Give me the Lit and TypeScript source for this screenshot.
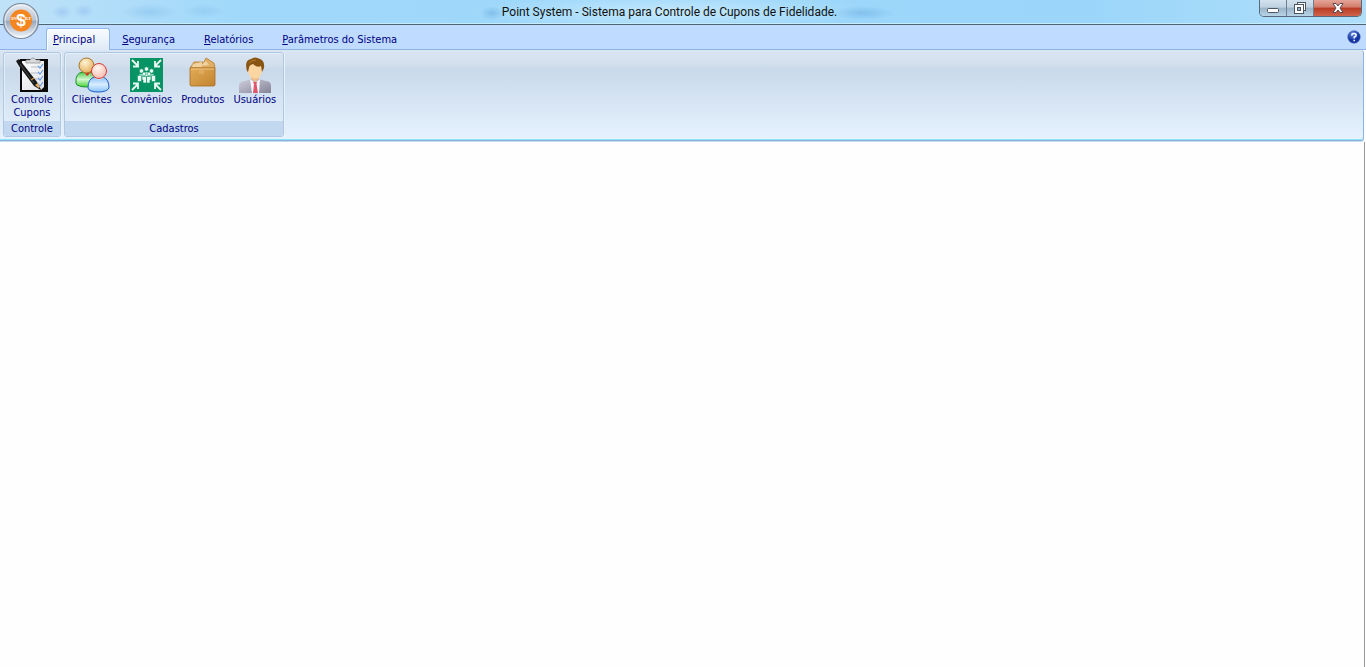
import { LitElement, html, css, svg } from "lit";
import { customElement, state } from "lit/decorators.js";

const icons = {
  controle: svg`<svg width="36" height="36" viewBox="0 0 36 36" aria-hidden="true">
    <defs><linearGradient id="paper" x1="0" y1="0" x2="1" y2="1"><stop offset="0" stop-color="#fff"/><stop offset="1" stop-color="#dcdfe4"/></linearGradient></defs>
    <rect x="6" y="2" width="28" height="33" fill="#0a0a0a"/>
    <path d="M8 4H30V30L27 33H8Z" fill="url(#paper)"/>
    <path d="M12 3H16Q19-1 22 3H26V6H12Z" fill="#d9dadd" stroke="#888" stroke-width=".7"/>
    <path d="M17 10H24M17 16H24M19 22H24M20 28H24" stroke="#aab0ba" stroke-width=".8"/>
    <path d="M24 9l2 2 3-4M24 15l2 2 3-4M24 21l2 2 3-4M24 27l2 2 3-4" fill="none" stroke="#6c9ce2" stroke-width="1.200"/>
    <path d="M2 4L5 2 23 25 27 33 20 29 5 9Z" fill="#171717"/>
    <path d="M6 7L20 26" stroke="#585858" stroke-width=".8"/>
    <path d="M17 23L20 21" stroke="#c99242" stroke-width="1.5"/>
    <path d="M21 28L24 26 27 33Z" fill="#e5ae62"/><path d="M25.500 30L27 33 24.500 31.500Z" fill="#111"/>
  </svg>`,
  clientes: svg`<svg width="36" height="36" viewBox="0 0 36 36" aria-hidden="true">
    <defs>
      <radialGradient id="gold" cx=".4" cy=".3" r=".75"><stop offset="0" stop-color="#fff3d4"/><stop offset="1" stop-color="#e2ad56"/></radialGradient>
      <radialGradient id="pink" cx=".4" cy=".3" r=".75"><stop offset="0" stop-color="#fff6f0"/><stop offset="1" stop-color="#f8b9ad"/></radialGradient>
      <linearGradient id="green" x1="0" y1="0" x2="0" y2="1"><stop offset="0" stop-color="#4bc94b"/><stop offset=".5" stop-color="#d2f7cc"/><stop offset="1" stop-color="#48d237"/></linearGradient>
      <linearGradient id="blue" x1="0" y1="0" x2="0" y2="1"><stop offset="0" stop-color="#8cc0f8"/><stop offset=".5" stop-color="#d8edff"/><stop offset="1" stop-color="#86c2fb"/></linearGradient>
    </defs>
    <path d="M2 26Q1 16 9 15H17Q23 17 21 28Q11 32 3 28Z" fill="url(#green)" stroke="#159323"/>
    <path d="M10 15L13 19 18 14Z" fill="#e52b22"/>
    <circle cx="12.500" cy="8.500" r="7.500" fill="url(#gold)" stroke="#a7752b"/>
    <path d="M14 31Q14 21 21 20H29Q35 22 35 31Q33 35 24 35 15 35 14 31Z" fill="url(#blue)" stroke="#2260c6"/>
    <path d="M20 20Q25 25 30 20Z" fill="#fff"/>
    <circle cx="25" cy="14" r="7.500" fill="url(#pink)" stroke="#d43c35"/>
  </svg>`,
  convenios: svg`<svg width="36" height="36" viewBox="0 0 36 36" aria-hidden="true">
    <rect x="2" y="1" width="33" height="34" fill="#079364"/>
    <g fill="none" stroke="#e9f8f1" stroke-width="1.800"><path d="M4 3L10 9M10 4V9.500H5M33 3L27 9M27 4V9.500H32M4 33L10 27M10 32V26.500H5M33 33L27 27M27 32V26.500H32"/></g>
    <g fill="#e9f8f1" stroke="#079364" stroke-width=".6">
      <circle cx="18.500" cy="12" r="2.200"/><path d="M16 15h5v6h-5z"/>
      <circle cx="13.500" cy="14" r="2.200"/><path d="M11 17h5v6h-5z"/>
      <circle cx="23.500" cy="14" r="2.200"/><path d="M21 17h5v6h-5z"/>
      <path d="M9.500 18.500h4v6h-4zM23.500 18.500h4v6h-4z"/>
      <circle cx="16" cy="17" r="1.900"/><circle cx="21" cy="17" r="1.900"/>
      <path d="M14 19.500h4.500v6.500H15v-3h-1zM18.500 19.500H23v3.500h-1v3h-3.500z"/>
    </g>
  </svg>`,
  produtos: svg`<svg width="36" height="36" viewBox="0 0 36 36" aria-hidden="true">
    <defs><linearGradient id="box" x1="0" y1="0" x2="1" y2="1"><stop offset="0" stop-color="#e3ac57"/><stop offset="1" stop-color="#c1832f"/></linearGradient></defs>
    <path d="M5 11L9 5 18 5 17 9 21 1 29 6 30 11Z" fill="#dfae65" stroke="#b77b2d" stroke-width=".8"/>
    <path d="M8 7L17 5 17 10H7ZM15 9L21 4 24 8Z" fill="#f1d3a2"/>
    <path d="M5 11H30V28L29 29H6L5 28Z" fill="url(#box)" stroke="#aa6d25" stroke-width=".8"/>
    <path d="M6 12H29" stroke="#f0c683"/><path d="M14 12H19V17H14Z" fill="#e2b46c" opacity=".6"/>
  </svg>`,
  usuarios: svg`<svg width="36" height="36" viewBox="0 0 36 36" aria-hidden="true">
    <defs><linearGradient id="suit" x1="0" y1="0" x2="1" y2="1"><stop offset="0" stop-color="#cfcfdd"/><stop offset="1" stop-color="#858397"/></linearGradient></defs>
    <path d="M2 36V28Q3 24 8 24L14 22H22L29 24Q33 24 34 28V36Z" fill="url(#suit)"/>
    <path d="M13 22L18 26 23 22 22 36H15Z" fill="#f6f7fc"/>
    <path d="M16 25H20L19.500 27 21 36H16L17 27Z" fill="#e0566a"/>
    <path d="M14 17H22V22L18 25 14 22Z" fill="#efbd87"/>
    <ellipse cx="18" cy="13.500" rx="7" ry="8" fill="#fbd6a3"/>
    <path d="M10 14Q7 3 14 2 18-1 23 2 28 4 27 11L25 15 24 9Q20 11 16 7Q12 8 12 11L11 15Z" fill="#8a5512"/>
    <path d="M12 6Q14 3 19 3" fill="none" stroke="#b67c30"/>
  </svg>`,
};

const tabs = ["Principal", "Segurança", "Relatórios", "Parâmetros do Sistema"];

const groups = [
  { title: "Controle", items: [{ icon: icons.controle, lines: ["Controle", "Cupons"] }] },
  {
    title: "Cadastros",
    items: [
      { icon: icons.clientes, lines: ["Clientes"] },
      { icon: icons.convenios, lines: ["Convênios"] },
      { icon: icons.produtos, lines: ["Produtos"] },
      { icon: icons.usuarios, lines: ["Usuários"] },
    ],
  },
];

@customElement("app-root")
export class AppRoot extends LitElement {
  @state() private active = 0;

  static styles = css`
    :host { display: flex; flex-direction: column; min-height: 100vh; position: relative; box-sizing: border-box; background: #fefefe; color: #00007f; font: 11px/13px "DejaVu Sans Condensed", "DejaVu Sans", sans-serif; }
    * { box-sizing: border-box; }
    button { font: inherit; color: inherit; border: 0; padding: 0; margin: 0; background: none; }
    svg { display: block; flex: none; }
    .titlebar { display: flex; align-items: flex-start; height: 25px; padding: 0 4px 0 80px; border-bottom: 1px solid #4f6373; box-shadow: inset 0 -1px #c5ecff;
      background:
        radial-gradient(ellipse 28px 8px at 150px 12px, #79b5e866, transparent),
        radial-gradient(ellipse 20px 7px at 204px 11px, #79b5e855, transparent),
        radial-gradient(ellipse 10px 7px at 62px 12px, #79a5e855, transparent),
        radial-gradient(ellipse 10px 7px at 84px 11px, #79a5e855, transparent),
        radial-gradient(ellipse 12px 7px at 492px 13px, #5a9fd877, transparent),
        radial-gradient(ellipse 32px 7px at 862px 13px, #5a9fd866, transparent),
        radial-gradient(ellipse 200px 18px at 49% 12px, #d8f1ffaa, transparent),
        linear-gradient(90deg, #c0e2f8, #9fd8fa 18%, #9bd6fa 80%, #b0def9); }
    .title { flex: 1; margin: 0; text-align: center; color: #111; font: 12px/24px Roboto, "Noto Sans", sans-serif; }
    .controls { display: flex; height: 17px; border: 1px solid #566a7c; border-top: 0; border-radius: 0 0 5px 5px; overflow: hidden; }
    .control { display: grid; place-items: center; width: 27px; background: linear-gradient(#d3e2ee, #bfd1e0 45%, #9bb4c8 50%, #b9d3e6); border-right: 1px solid #6d8192; }
    .close { width: 47px; border: 0; background: linear-gradient(#e3a599, #d27a68 45%, #b93a23 50%, #d0644b); }
    .orb { position: absolute; left: 2px; top: 2px; width: 38px; height: 38px; }
    .orb text { fill: #fff; font-family: "Liberation Serif", serif; font-weight: bold; font-size: 5px; text-anchor: middle; }
    .orb .sign { font-family: "Liberation Sans", sans-serif; font-size: 17px; }
    .tabstrip { display: flex; align-items: flex-end; height: 25px; padding: 0 5px 0 46px; background: #bfdbff; border-bottom: 1px solid #8db2e3; }
    .tab { height: 22px; padding: 0 16px 0 11px; border: 1px solid transparent; border-bottom: 0; margin-bottom: -1px; }
    .tab.active { padding-left: 6px; padding-right: 14px; border-color: #8fb8ea; border-radius: 3px 3px 0 0; background: linear-gradient(#f8fcff, #dfeaf6); box-shadow: inset 1px 1px #fff; }
    .key { text-decoration: underline; }
    .help { margin: 0 0 5px auto; }
    .ribbon { display: flex; gap: 3px; height: 90px; margin-right: 2px; padding: 2px 3px 2px; border-right: 1px solid #8db2e3; border-bottom: 1px solid #8ce4f8; border-radius: 0 3px 3px 0; background: linear-gradient(#dbe6f4, #d2dfed 16%, #c9d9ea 22%, #e6f2fe 100%); box-shadow: 0 1px #8cb0d8, 0 2px #c5daf4; }
    .group { display: flex; flex-direction: column; border: 1px solid #b0c7e0; border-radius: 3px; box-shadow: inset 1px 1px #e5effa, 1px 0 #e9f2fb; overflow: hidden; }
    .items { flex: 1; display: flex; align-items: flex-start; padding: 4px 5px 0; }
    .item { display: flex; flex-direction: column; align-items: center; padding: 0 2px; }
    .items .item + .item { margin-left: 5px; }
    .caption { height: 15px; padding: 0; margin: 0; font: inherit; line-height: 15px; text-align: center; background: #c1d8f0; }
    .workspace { flex: 1; margin-top: 2px; margin-right: 1px; border-right: 1px solid #999; }
  `;

  render() {
    return html`
      <header class="titlebar">
        <h1 class="title">Point System - Sistema para Controle de Cupons de Fidelidade.</h1>
        <div class="controls">
          <button class="control" aria-label="Minimizar"><svg width="14" height="14"><rect x="1.500" y="7.500" width="11" height="4" rx="1" fill="#fff" stroke="#4b5663"/></svg></button>
          <button class="control" aria-label="Restaurar"><svg width="14" height="14"><rect x="4.500" y="1.500" width="8" height="8" fill="#fff" stroke="#4b5663"/><rect x="1.500" y="3.500" width="9" height="9" fill="#fff" stroke="#4b5663"/><rect x="4.500" y="6.500" width="3" height="3" fill="#9bb4c8" stroke="#4b5663"/></svg></button>
          <button class="control close" aria-label="Fechar"><svg width="14" height="14"><path d="M2 2.500H5L7 5 9 2.500H12L9 7 12 11.500H9L7 9 5 11.500H2L5 7Z" fill="#fff" stroke="#5a4a50"/></svg></button>
        </div>
      </header>
      <button class="orb" aria-label="Menu do aplicativo">
        <svg width="38" height="38" viewBox="0 0 38 38">
          <defs><linearGradient id="metal" x1="0" y1="0" x2="0" y2="1"><stop offset="0" stop-color="#e6ebf2"/><stop offset=".48" stop-color="#b9c3d2"/><stop offset=".5" stop-color="#98a6ba"/><stop offset="1" stop-color="#f5f9fd"/></linearGradient></defs>
          <circle cx="19" cy="19" r="17.500" fill="url(#metal)" stroke="#7d8a9c" stroke-width="1.200"/>
          <circle cx="19" cy="19" r="16" fill="none" stroke="#fff" stroke-opacity=".6"/>
          <circle cx="19" cy="18.500" r="11" fill="#f5851f"/>
          <text x="12" y="18">IN</text><text class="sign" x="19" y="24">$</text><text x="26" y="18">RT</text>
        </svg>
      </button>
      <nav class="tabstrip">
        ${tabs.map((t, i) => html`<button class="tab ${i === this.active ? "active" : ""}" @click=${() => (this.active = i)}><span class="key">${t[0]}</span>${t.slice(1)}</button>`)}
        <button class="help" aria-label="Ajuda"><svg width="14" height="14"><defs><radialGradient id="ball" cx=".4" cy=".25"><stop offset="0" stop-color="#6c94e8"/><stop offset="1" stop-color="#1535a0"/></radialGradient></defs><circle cx="7" cy="7" r="6.200" fill="url(#ball)" stroke="#3456ad" stroke-width=".6"/><path d="M4.800 5.500Q4.800 3.500 7 3.500T9.200 5.300Q9.200 6.300 7.200 7.200V8.500M7.200 9.700V11.200" fill="none" stroke="#fff" stroke-width="1.500"/></svg></button>
      </nav>
      <section class="ribbon">
        ${groups.map((g) => html`<div class="group">
          <div class="items">${g.items.map((it) => html`<button class="item">${it.icon}${it.lines.map((l) => html`<span>${l}</span>`)}</button>`)}</div>
          <h2 class="caption">${g.title}</h2>
        </div>`)}
      </section>
      <main class="workspace"></main>
    `;
  }
}
